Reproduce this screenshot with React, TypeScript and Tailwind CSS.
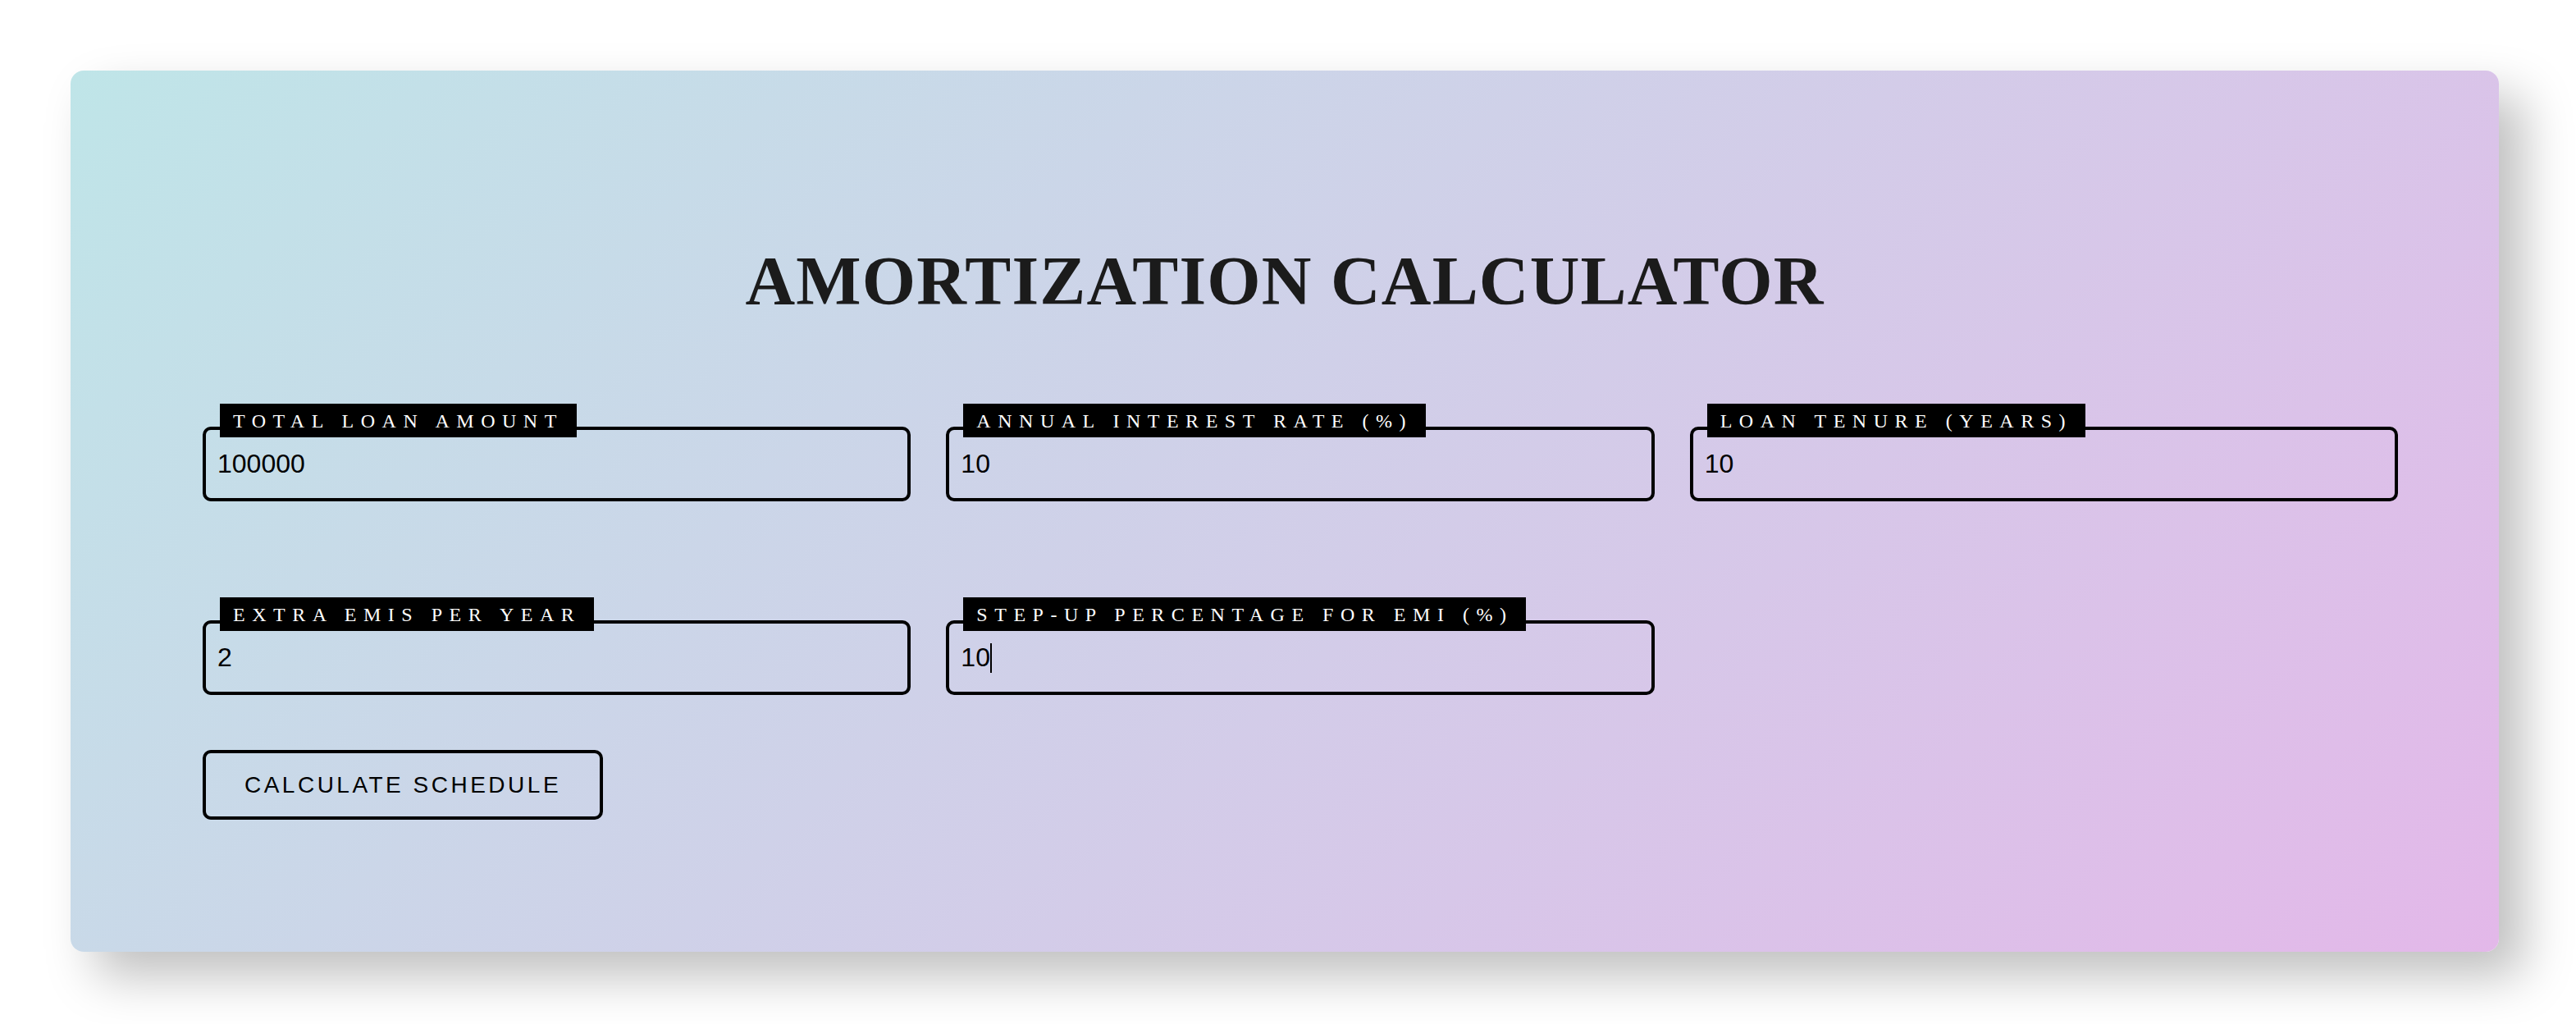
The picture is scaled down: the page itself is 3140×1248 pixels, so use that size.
import React from "react";

const fields = [
  { label: "Total Loan Amount", value: "100000" },
  { label: "Annual Interest Rate (%)", value: "10" },
  { label: "Loan Tenure (Years)", value: "10" },
  { label: "Extra EMIs per Year", value: "2" },
  { label: "Step-up Percentage for EMI (%)", value: "10", focus: true },
];

function Field({ label, value, focus }: { label: string; value: string; focus?: boolean }) {
  return (
    <div className="relative pt-[28px]">
      {/* Label sits over the top border */}
      <span className="absolute left-[21px] top-0 z-10 flex h-[41px] items-center bg-black px-[16px] font-['Liberation_Serif',serif] text-[24px] uppercase leading-none tracking-[0.355em] text-white">
        {label}
      </span>
      <input
        type="text"
        defaultValue={value}
        autoFocus={focus}
        className="block h-[91px] w-full rounded-[10px] border-[4px] border-black bg-transparent px-[14px] font-['Liberation_Sans',Arial,sans-serif] text-[32px] text-black caret-transparent outline-none"
      />
      {focus && (
        <span className="pointer-events-none absolute left-[54px] top-[56px] h-[36px] w-[2px] bg-black" />
      )}
    </div>
  );
}

export default function App() {
  return (
    <div className="min-h-screen bg-white pl-[86px] pt-[86px] pb-[88px]">
      <div className="w-[2960px] rounded-[16px] bg-[linear-gradient(135deg,#bfe5e8,#e3b8e9)] pb-[161px] pl-[161px] pr-[123px] pt-[215px] shadow-[30px_30px_60px_rgba(0,0,0,0.25)]">
        <h1 className="-ml-[161px] -mr-[123px] text-center font-['Liberation_Serif',serif] text-[84px] font-bold uppercase leading-none tracking-[1.2px] text-[#1b1b1b]">
          Amortization Calculator
        </h1>

        <div className="mt-[107px] grid w-[2676px] grid-cols-3 gap-x-[43px] gap-y-[117px]">
          {fields.map((f) => (
            <Field key={f.label} label={f.label} value={f.value} focus={f.focus} />
          ))}
        </div>

        <button
          type="button"
          className="mt-[67px] flex h-[85px] w-[488px] items-center justify-center rounded-[10px] border-[4px] border-black bg-transparent font-['Liberation_Sans',Arial,sans-serif] text-[28px] uppercase leading-none tracking-[3.5px] text-black"
        >
          Calculate Schedule
        </button>
      </div>
    </div>
  );
}
